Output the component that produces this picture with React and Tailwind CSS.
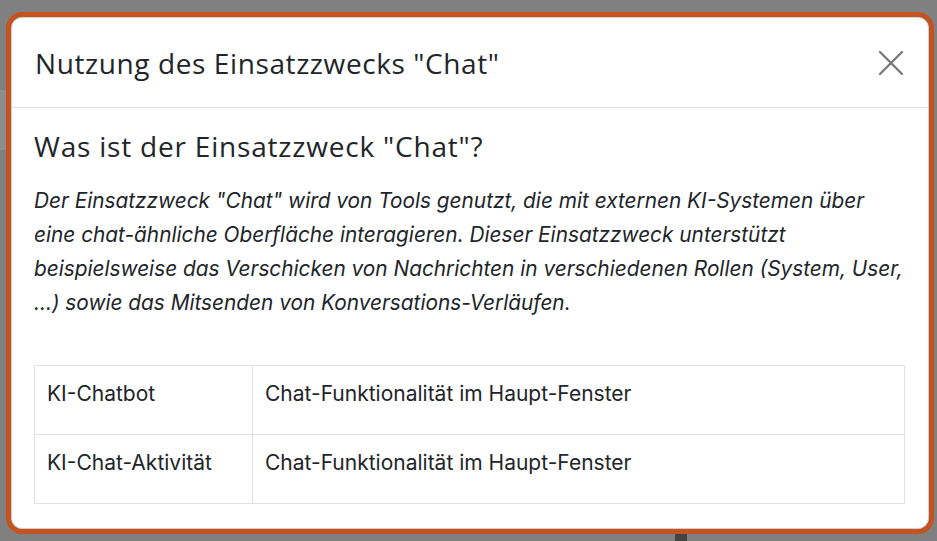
export default function App() {
  const rows = [
    ['KI-Chatbot', 'Chat-Funktionalität im Haupt-Fenster'],
    ['KI-Chat-Aktivität', 'Chat-Funktionalität im Haupt-Fenster'],
  ];

  return (
    <div className="relative h-[541px] w-[937px] overflow-hidden bg-[#808080]">
      <div className="absolute left-0 top-[90px] h-[60px] w-[8px] bg-[#8c8c8c]" />
      <div className="absolute bottom-0 left-[675px] h-[8px] w-[12px] bg-[#444]" />
      <div className="relative ml-[6px] mt-[12px] h-[522px] w-[928px] rounded-[16px] border-[5px] border-[#c4531f]">
        <div className="flex h-full flex-col overflow-hidden rounded-[11px] border border-[#d0d0d0] bg-white text-[#212529]">
          <div className="flex h-[90px] shrink-0 items-center justify-between border-b border-[#dee2e6] pl-[23px] pr-[22px]">
            <h1 className="font-['Open_Sans',sans-serif] text-[28px] font-normal tracking-[0.6px]">
              Nutzung des Einsatzzwecks "Chat"
            </h1>
            <svg width="26" height="26" viewBox="0 0 26 26" className="mr-[2px]">
              <path d="M2 2 L24 24 M24 2 L2 24" stroke="#7a7a7a" strokeWidth="2.4" strokeLinecap="round" />
            </svg>
          </div>
          <div className="px-[22px] pt-[20px]">
            <h2 className="font-['Open_Sans',sans-serif] text-[28px] font-normal leading-[36px] tracking-[0.8px]">
              Was ist der Einsatzzweck "Chat"?
            </h2>
            <p className="mt-[20px] w-[871px] font-['Inter',sans-serif] text-[20.8px] italic leading-[34px]">
              Der Einsatzzweck "Chat" wird von Tools genutzt, die mit externen KI-Systemen über eine chat-ähnliche Oberfläche interagieren. Dieser Einsatzzweck unterstützt beispielsweise das Verschicken von Nachrichten in verschiedenen Rollen (System, User, ...) sowie das Mitsenden von Konversations-Verläufen.
            </p>
            <table className="mt-[45px] w-[871px] border-collapse font-['Inter',sans-serif] text-[21px]">
              <tbody>
                {rows.map(([a, b]) => (
                  <tr key={a} className="h-[69px]">
                    <td className="w-[218px] border border-[#dee2e6] px-[12px] pb-[26px] pt-[14px] align-top leading-[28px]">{a}</td>
                    <td className="border border-[#dee2e6] px-[12px] pb-[26px] pt-[14px] align-top leading-[28px]">{b}</td>
                  </tr>
                ))}
              </tbody>
            </table>
          </div>
        </div>
      </div>
    </div>
  );
}
